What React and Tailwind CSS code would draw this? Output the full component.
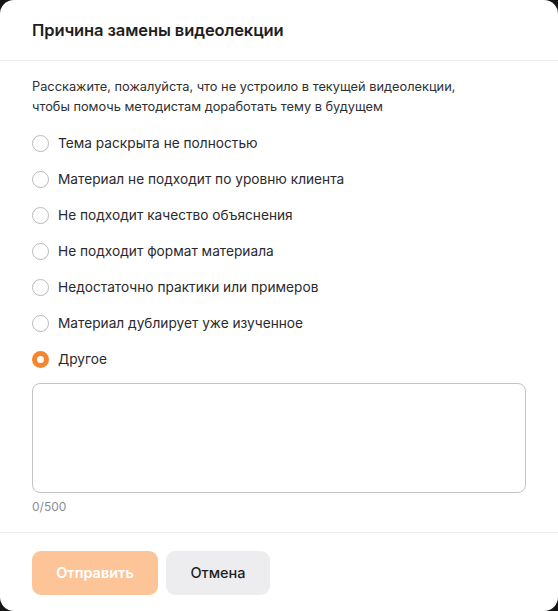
import React, { useState } from "react";

const reasons = [
  "Тема раскрыта не полностью",
  "Материал не подходит по уровню клиента",
  "Не подходит качество объяснения",
  "Не подходит формат материала",
  "Недостаточно практики или примеров",
  "Материал дублирует уже изученное",
  "Другое",
];

const Radio = ({ checked }) =>
  checked ? (
    <span className="w-[17px] h-[17px] rounded-full border-[5px] border-[#f5862e] bg-white shrink-0" />
  ) : (
    <span className="w-[17px] h-[17px] rounded-full border border-[#b9b9be] bg-white shrink-0" />
  );

export default function App() {
  const [selected, setSelected] = useState(reasons.length - 1);
  const [comment, setComment] = useState("");

  return (
    <div
      className="w-[558px] h-[611px] bg-[#151515]"
      style={{ fontFamily: "Inter, 'Noto Sans', sans-serif" }}
    >
      <div className="w-full h-full bg-white rounded-[14px] flex flex-col">
        {/* Header */}
        <div className="h-[61px] px-[32px] flex items-center border-b border-[#ececef]">
          <h2 className="text-[16.5px] font-semibold text-[#1e1e22] tracking-[-0.1px]">
            Причина замены видеолекции
          </h2>
        </div>

        {/* Body */}
        <div className="px-[32px] pt-[16px] pb-[16px] border-b border-[#ececef]">
          <p className="text-[12.8px] leading-[20px] text-[#2f2f33]">
            Расскажите, пожалуйста, что не устроило в текущей видеолекции,
            <br />
            чтобы помочь методистам доработать тему в будущем
          </p>

          <div className="mt-[8px] flex flex-col">
            {reasons.map((reason, i) => (
              <label
                key={reason}
                className="h-[36px] flex items-center gap-[9px] cursor-pointer"
                onClick={() => setSelected(i)}
              >
                <Radio checked={selected === i} />
                <span className="text-[13.7px] text-[#2a2a2e]">{reason}</span>
              </label>
            ))}
          </div>

          <textarea
            value={comment}
            onChange={(e) => setComment(e.target.value)}
            maxLength={500}
            className="mt-[6px] block w-full h-[110px] rounded-[8px] border border-[#c4c4c8] resize-none outline-none px-3 py-2 text-[13px]"
          />
          <div className="mt-[5px] text-[12px] text-[#8d8d93]">
            {comment.length}/500
          </div>
        </div>

        {/* Footer */}
        <div className="px-[32px] pt-[18px] flex gap-[8px]">
          <button className="h-[44px] w-[126px] rounded-[9px] bg-[#fdc497] text-white text-[14.5px] font-semibold">
            Отправить
          </button>
          <button className="h-[44px] w-[104px] rounded-[9px] bg-[#ededf0] text-[#1e1e22] text-[14.5px] font-medium">
            Отмена
          </button>
        </div>
      </div>
    </div>
  );
}
